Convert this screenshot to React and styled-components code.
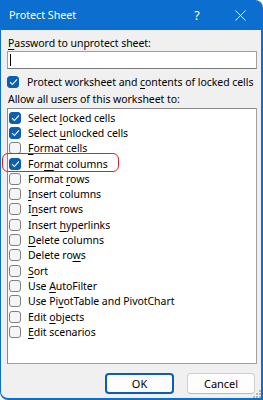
import React from "react";
import styled, { createGlobalStyle } from "styled-components";

const Global = createGlobalStyle`
  html, body { margin: 0; padding: 0; background: #ffffff; }
  body { font-family: "Noto Sans", "Open Sans", sans-serif; }
`;

const BLUE = "#0c6fd0";

const Window = styled.div`
  position: relative;
  width: 263px;
  height: 400px;
  display: flex;
  flex-direction: column;
  box-sizing: border-box;
  font-family: "Noto Sans", sans-serif;
  font-size: 10.5px;
  letter-spacing: -0.05px;
  white-space: nowrap;
  color: #000;
`;

const TitleBar = styled.div`
  height: 30px;
  flex: none;
  background: ${BLUE};
  border-top-right-radius: 8px;
  display: flex;
  align-items: center;
  padding-left: 9px;
  color: #fff;
  font-size: 10.8px;
`;

const Title = styled.div`
  flex: 1;
  padding-bottom: 1px;
`;

const TitleButton = styled.div`
  width: ${(p) => p.$w}px;
  height: 30px;
  display: flex;
  align-items: center;
  justify-content: center;
  font-size: 12.5px;
`;

const Body = styled.div`
  flex: 1;
  background: #f0f0f0;
  border-left: 1px solid ${BLUE};
  border-right: 2px solid ${BLUE};
  border-bottom: 2px solid ${BLUE};
  border-bottom-left-radius: 8px;
  padding: 5px 4px 0 6px;
  display: flex;
  flex-direction: column;
`;

const Label = styled.div`
  height: 16px;
  line-height: 16px;
  padding-left: 1px;
  margin-top: ${(p) => p.$mt || 0}px;
`;

const Input = styled.div`
  height: 18px;
  box-sizing: border-box;
  background: #fff;
  border: 1px solid #a0a0a0;
  border-bottom-color: #7a7a7a;
  display: flex;
  align-items: center;
  padding-left: 2px;
`;

const Caret = styled.div`
  width: 1px;
  height: 12px;
  background: #000;
`;

const Row = styled.div`
  display: flex;
  align-items: center;
  height: ${(p) => p.$h}px;
  margin-top: ${(p) => p.$mt || 0}px;
  padding-left: ${(p) => p.$pl || 0}px;
`;

const Box = styled.div`
  width: ${(p) => p.$s}px;
  height: ${(p) => p.$s}px;
  box-sizing: border-box;
  border-radius: 3px;
  flex: none;
  margin-right: ${(p) => p.$mr}px;
  display: flex;
  align-items: center;
  justify-content: center;
  background: ${(p) => (p.$on ? "#0a5fb4" : "#f5f5f5")};
  border: 1px solid ${(p) => (p.$on ? "#0a5fb4" : "#7f7f7f")};
`;

const ListBox = styled.div`
  margin-top: 1px;
  height: 256px;
  box-sizing: border-box;
  background: #fff;
  border: 1px solid #a0a0a0;
  border-top-color: #8a8a8a;
  border-left-color: #8a8a8a;
  padding-top: 1px;
  display: flex;
  flex-direction: column;
`;

const Buttons = styled.div`
  display: flex;
  justify-content: flex-end;
  gap: 13px;
  margin-top: 9px;
  padding-right: 2px;
`;

const Button = styled.div`
  width: ${(p) => p.$w}px;
  height: 21px;
  box-sizing: border-box;
  border-radius: 4px;
  background: #fdfdfd;
  border: ${(p) => (p.$def ? `2px solid #0a5fb4` : `1px solid #d0d0d0`)};
  border-bottom-color: ${(p) => (p.$def ? "#0a5fb4" : "#b8b8b8")};
  display: flex;
  align-items: center;
  justify-content: center;
  padding-bottom: 1px;
  font-size: 11px;
`;

const U = styled.span`
  text-decoration: underline;
  text-underline-offset: 2px;
  text-decoration-thickness: 1px;
`;

const Highlight = styled.div`
  position: absolute;
  left: 2px;
  top: 153px;
  width: 117px;
  height: 19px;
  box-sizing: border-box;
  border: 1.5px solid #e0202a;
  border-radius: 6px;
  pointer-events: none;
`;

const Grip = styled.svg`
  position: absolute;
  right: 2px;
  bottom: 2px;
`;

const Check = () => (
  <svg width="9" height="8" viewBox="0 0 9 8">
    <path d="M1 4.2 L3.4 6.5 L8 1.4" fill="none" stroke="#fff" strokeWidth="1.1" />
  </svg>
);

const CheckBox = ({ on, s, mr }) => (
  <Box $on={on} $s={s} $mr={mr}>
    {on && <Check />}
  </Box>
);

const items = [
  [true, "Select ", "l", "ocked cells"],
  [true, "Select ", "u", "nlocked cells"],
  [false, "", "F", "ormat cells"],
  [true, "For", "m", "at columns"],
  [false, "Format ", "r", "ows"],
  [false, "", "I", "nsert columns"],
  [false, "I", "n", "sert rows"],
  [false, "Insert ", "h", "yperlinks"],
  [false, "", "D", "elete columns"],
  [false, "Delete ro", "w", "s"],
  [false, "", "S", "ort"],
  [false, "Use ", "A", "utoFilter"],
  [false, "Use Pi", "v", "otTable and PivotChart"],
  [false, "Edit ", "o", "bjects"],
  [false, "", "E", "dit scenarios"],
];

export default function App() {
  return (
    <>
      <Global />
      <Window>
        <TitleBar>
          <Title>Protect Sheet</Title>
          <TitleButton $w={40}>?</TitleButton>
          <TitleButton $w={46}>
            <svg width="11" height="11" viewBox="0 0 11 11">
              <path d="M0.5 0.5 L10.5 10.5 M10.5 0.5 L0.5 10.5" stroke="#fff" strokeWidth="1" />
            </svg>
          </TitleButton>
        </TitleBar>
        <Body>
          <Label>
            <U>P</U>assword to unprotect sheet:
          </Label>
          <Input>
            <Caret />
          </Input>
          <Row $h={15} $mt={5}>
            <CheckBox on s={12} mr={8} />
            <span>
              Protect worksheet and <U>c</U>ontents of locked cells
            </span>
          </Row>
          <Label $mt={2}>Allow all users of this worksheet to:</Label>
          <ListBox>
            {items.map(([on, a, k, b], i) => (
              <Row key={i} $h={15.3} $pl={1}>
                <CheckBox on={on} s={12} mr={7} />
                <span>
                  {a}
                  <U>{k}</U>
                  {b}
                </span>
              </Row>
            ))}
          </ListBox>
          <Buttons>
            <Button $w={69} $def>OK</Button>
            <Button $w={68}>Cancel</Button>
          </Buttons>
        </Body>
        <Highlight />
        <Grip width="8" height="8" viewBox="0 0 8 8">
          {[
            [6, 0], [6, 3], [3, 3], [6, 6], [3, 6], [0, 6],
          ].map(([x, y], i) => (
            <rect key={i} x={x} y={y} width="2" height="2" fill="#b5b5b5" />
          ))}
        </Grip>
      </Window>
    </>
  );
}
